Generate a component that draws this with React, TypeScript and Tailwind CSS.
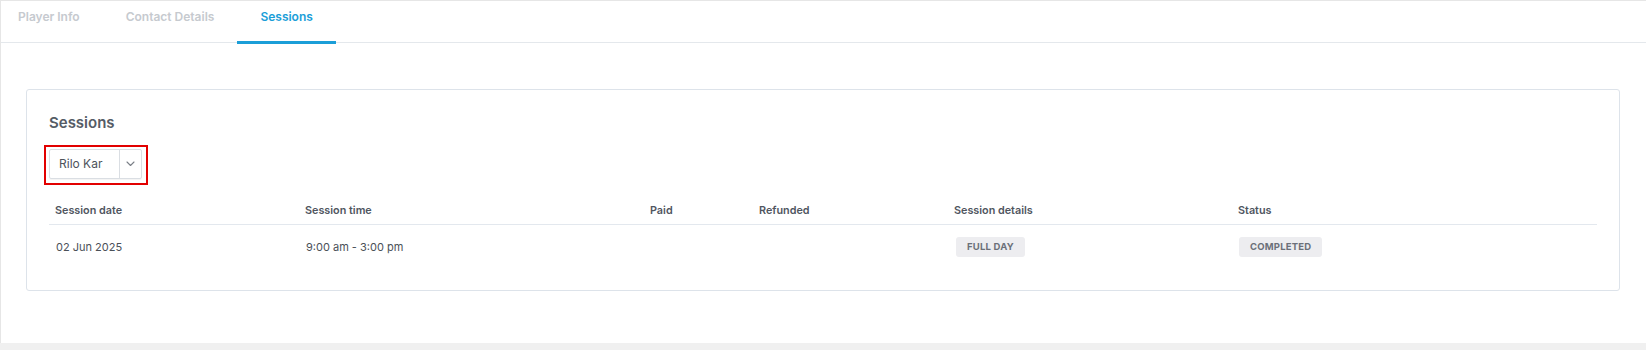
import React from 'react';

const tabs = ['Player Info', 'Contact Details', 'Sessions'];

function Chevron() {
  return (
    <svg width="9" height="6" viewBox="0 0 9 6" fill="none">
      <path d="M1 1l3.5 3.5L8 1" stroke="#7a7f87" strokeWidth="1.1" strokeLinecap="round" strokeLinejoin="round" />
    </svg>
  );
}

function Badge({ label }: { label: string }) {
  return (
    <span className="inline-flex items-center h-[20px] px-[11px] rounded-[3px] bg-[#ededf0] text-[9.5px] font-bold tracking-[0.2px] text-[#6b7079] uppercase">
      {label}
    </span>
  );
}

export default function App() {
  return (
    <div className="min-h-screen bg-[#f0f0f0] font-['Inter',sans-serif]">
      <div className="h-[343px] bg-white border-l border-t border-[#e6e6e6]">
        <div className="flex h-[42px] border-b border-[#e4e8ec]">
          {tabs.map((t, i) => {
            const active = t === 'Sessions';
            return (
              <div
                key={t}
                className={`relative pt-[8px] text-[12px] leading-[16px] font-semibold ${i === 0 ? 'pl-[17px] pr-[23px]' : 'px-[23px]'} ${active ? 'text-[#1b9ed8]' : 'text-[#c6cacf]'}`}
              >
                {t}
                {active && <span className="absolute left-0 right-0 -bottom-[2px] h-[3px] bg-[#1b9ed8]" />}
              </div>
            );
          })}
        </div>

        <div className="pl-[25px] pr-[26px] pt-[46px]">
          <div className="border border-[#dde3ea] rounded-[3px] px-[22px] pt-[23px] pb-[21px]">
            <h2 className="text-[15px] leading-[20px] font-semibold text-[#555c66]">Sessions</h2>

            <div className="mt-[12px] -ml-[5px] w-[104px] h-[40px] border-2 border-[#e20000] pt-[2px] pl-[3px]">
              <div className="flex h-[30px] w-[93px] border border-[#dadee3] rounded-[2px] shadow-[0_1px_1px_rgba(0,0,0,0.05)]">
                <div className="w-[69px] flex items-center pl-[9px] text-[12px] text-[#4d535b]">Rilo Kar</div>
                <div className="flex-1 flex items-center justify-center border-l border-[#dadee3]">
                  <Chevron />
                </div>
              </div>
            </div>

            <div className="grid grid-cols-[250px_345px_109px_195px_284px_1fr] h-[40px] items-end pb-[5px] border-b border-[#e3e8ee] text-[10.8px] leading-[16px] font-semibold text-[#50565f]">
              <div className="pl-[6px]">Session date</div>
              <div className="pl-[6px]">Session time</div>
              <div className="pl-[6px]">Paid</div>
              <div className="pl-[6px]">Refunded</div>
              <div className="pl-[6px]">Session details</div>
              <div className="pl-[6px]">Status</div>
            </div>

            <div className="grid grid-cols-[250px_345px_109px_195px_284px_1fr] h-[44px] items-center text-[11px] text-[#4a5058]">
              <div className="pl-[7px]">02 Jun 2025</div>
              <div className="pl-[7px]">9:00 am - 3:00 pm</div>
              <div />
              <div />
              <div className="pl-[8px]">
                <Badge label="Full day" />
              </div>
              <div className="pl-[7px]">
                <Badge label="Completed" />
              </div>
            </div>
          </div>
        </div>
      </div>
    </div>
  );
}
